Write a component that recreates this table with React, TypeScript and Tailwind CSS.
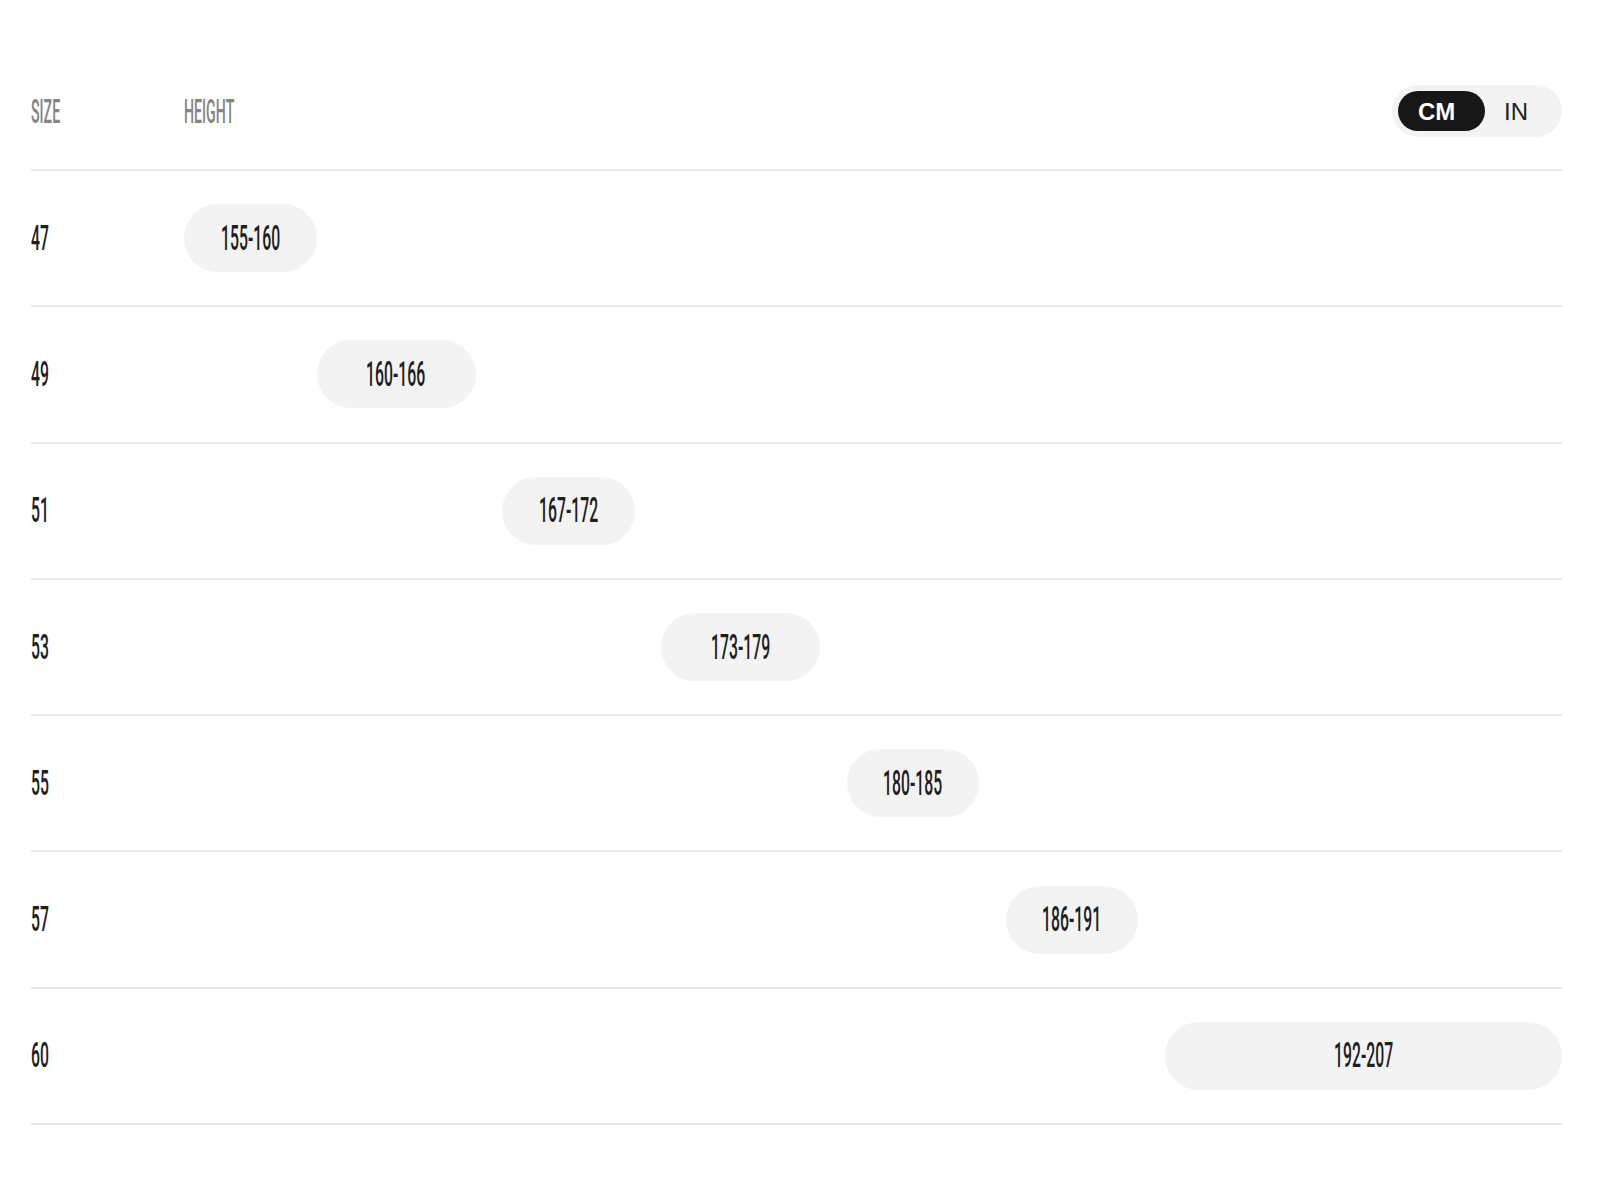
import { useState } from "react";

const MIN = 155;
const SPAN = 52;

const rows = [
  { size: "47", from: 155, to: 160 },
  { size: "49", from: 160, to: 166 },
  { size: "51", from: 167, to: 172 },
  { size: "53", from: 173, to: 179 },
  { size: "55", from: 180, to: 185 },
  { size: "57", from: 186, to: 191 },
  { size: "60", from: 192, to: 207 },
];

const condensed =
  "inline-block leading-none font-medium font-['Roboto',sans-serif]";

export default function App() {
  const [unit, setUnit] = useState<"cm" | "in">("cm");

  return (
    <main className="min-h-[1200px] bg-white">
      <div className="pl-[31px] pr-[38px] pt-[85px]">
        {/* Header */}
        <div className="flex items-center h-[52px] box-content pb-[32px] border-b-2 border-[#e8e8e8]">
          <div className="w-[153px] pt-[2px]">
            <span className={`${condensed} scale-x-[0.43] origin-left text-[#858585] text-[33px]`}>SIZE</span>
          </div>
          <div className="flex-1 pt-[2px]">
            <span className={`${condensed} scale-x-[0.43] origin-left text-[#858585] text-[33px]`}>HEIGHT</span>
          </div>
          <div className="flex items-center h-[52px] w-[170px] p-[6px] rounded-full bg-[#f3f3f3] font-['Liberation_Sans',Arial,sans-serif] text-[24px] leading-none">
            <button
              className={`h-[40px] w-[87px] pl-[20px] pt-[2px] text-left rounded-full ${unit === "cm" ? "bg-[#171717] text-white font-bold" : "text-[#222]"}`}
              onClick={() => setUnit("cm")}
            >
              CM
            </button>
            <button
              className={`h-[40px] flex-1 pl-[19px] pt-[2px] text-left rounded-full ${unit === "in" ? "bg-[#171717] text-white font-bold" : "text-[#222]"}`}
              onClick={() => setUnit("in")}
            >
              IN
            </button>
          </div>
        </div>

        {/* Rows */}
        {rows.map((r) => (
          <div key={r.size} className="flex items-center h-[136.3px] border-b-2 border-[#e8e8e8]">
            <div className="w-[153px]">
              <span className={`${condensed} scale-x-[0.45] text-[35px] origin-left text-[#1e1e1e]`}>{r.size}</span>
            </div>
            <div className="flex-1">
              <div
                className="h-[68px] rounded-full bg-[#f3f3f3] flex items-center justify-center"
                style={{
                  marginLeft: `${((r.from - MIN) / SPAN) * 100}%`,
                  width: `${((r.to - r.from) / SPAN) * 100}%`,
                }}
              >
                <span className={`${condensed} scale-x-[0.45] text-[35px] origin-center text-[#1e1e1e]`}>
                  {r.from}-{r.to}
                </span>
              </div>
            </div>
          </div>
        ))}
      </div>
    </main>
  );
}
